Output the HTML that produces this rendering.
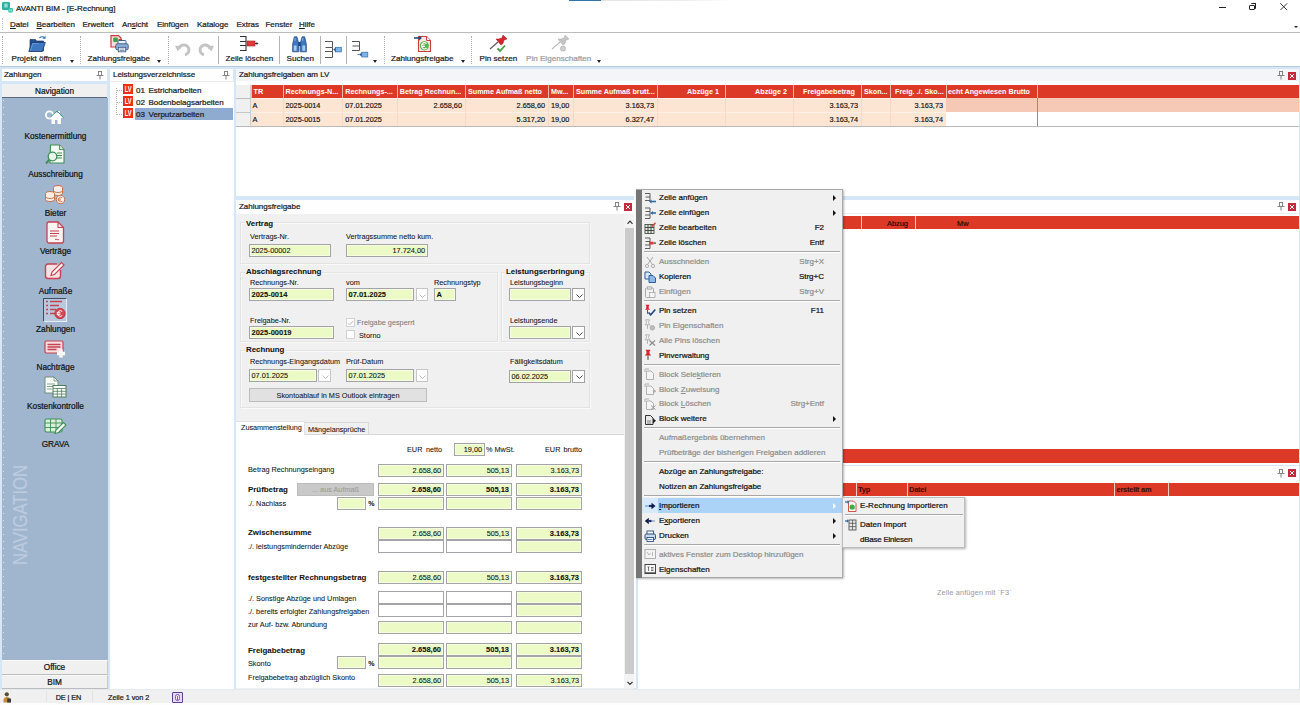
<!DOCTYPE html>
<html><head><meta charset="utf-8">
<style>
*{box-sizing:border-box;margin:0;padding:0}
html,body{width:1300px;height:705px;overflow:hidden;background:#fff}
body{font-family:"Liberation Sans",sans-serif;font-size:9.5px;color:#111;position:relative;-webkit-text-stroke:0.22px}
.a{position:absolute}
.t{position:absolute;white-space:nowrap;line-height:12px}
.ui{font-size:8px;letter-spacing:-0.03px;color:#1a1a1a}
.b{font-weight:bold}
.ph{position:absolute;height:14px;background:#f5f7fa}
.red{background:#dc3a26}
.f{position:absolute;background:#ecfac6;border:1px solid #a3a3a8;height:13.100px;font-size:7.3px;line-height:11.300px;-webkit-text-stroke:0.08px;text-align:right;padding-right:2px;white-space:nowrap;box-shadow:inset 0 0 0 1px rgba(255,255,255,.5)}
.f.l{text-align:left;padding-left:1.500px}
.f.b{font-size:7.500px}
.f.w{background:#fff;box-shadow:none}
.dd{position:absolute;height:13.100px;width:14px;background:#fff;border:1px solid #a2a2a2}
.dd svg{position:absolute;left:2.500px;top:4.300px}
.gb{position:absolute;border:1px solid #e3e3e3;box-shadow:1px 1px 0 #f9f9f9,inset 1px 1px 0 #f9f9f9}
.lb{position:absolute;white-space:nowrap;font-size:7.3px;line-height:11px;color:#111;-webkit-text-stroke:0.06px}
.mi{position:absolute;left:659px;white-space:nowrap;font-size:8px;letter-spacing:0;line-height:12px;color:#111}
.mi.d{color:#8e8e8e}
.sc{position:absolute;right:476px;white-space:nowrap;font-size:8px;letter-spacing:0;line-height:12px;color:#111}
.sc.d{color:#8e8e8e}
.sep{position:absolute;left:644px;width:196px;height:2px;border-top:1px solid #a8a8a8;border-bottom:1px solid #fff}
.ar{position:absolute;left:833px;width:0;height:0;border-left:3px solid #111;border-top:3px solid transparent;border-bottom:3px solid transparent}
.tsep{position:absolute;top:36px;height:28px;width:0;border-left:1px solid #b4b4b4}
.tdot{position:absolute;top:36px;height:28px;width:0;border-left:1px dotted #b0b0b0}
.tarr{position:absolute;top:60px;width:0;height:0;border-top:3px solid #222;border-left:2.5px solid transparent;border-right:2.5px solid transparent}
.tl{position:absolute;top:52.500px;white-space:nowrap;font-size:8.1px;letter-spacing:0;line-height:12px;color:#1a1a1a}
.nl{position:absolute;left:2px;width:107px;text-align:center;white-space:nowrap;font-size:8.25px;letter-spacing:0;line-height:12px;color:#111}
.th{position:absolute;top:85px;height:13px;border-left:1px solid #f3b7a8;color:#fff;font-size:7.2px;line-height:13px;white-space:nowrap;overflow:hidden;padding:0 3px 0 2px;font-weight:bold;letter-spacing:0;-webkit-text-stroke:0}
.td{position:absolute;height:14px;font-size:7.3px;letter-spacing:0;-webkit-text-stroke:0.16px;line-height:15px;white-space:nowrap;padding:0 3px 0 2px;color:#111;border-left:1px solid #f7d9ca}
.r{text-align:right}
.lv{width:10.600px;height:9.800px;background:#ee2e12;overflow:hidden}
.lv::after{content:"LV";position:absolute;left:-4.700px;top:0;width:20px;text-align:center;color:#fff;font-size:9.500px;line-height:10px;font-weight:bold;letter-spacing:-0.3px;transform:scaleX(.6);-webkit-text-stroke:0}
.xb{width:8px;height:8px;background:#c5283a;margin-top:.7px}
.xb::after{content:"";position:absolute;left:2px;top:2px;width:4px;height:4px;background:linear-gradient(45deg,transparent 38%,#fff 38%,#fff 62%,transparent 62%),linear-gradient(-45deg,transparent 38%,#fff 38%,#fff 62%,transparent 62%)}
</style></head><body>
<!-- TITLEBAR -->
<div class="a" style="left:569px;top:0;width:32px;height:1px;background:#2f74ad"></div>
<div class="a" style="left:601px;top:0;width:130px;height:1px;background:linear-gradient(to right,#e2e2e2,#efefef 70%,#fff)"></div>
<svg class="a" style="left:1.500px;top:2.300px" width="11" height="11" viewBox="0 0 11 11"><rect x="0" y="0" width="8" height="8" rx="1.300" fill="#2bb3a0"/><rect x="6.300" y="6" width="4.500" height="4.500" rx=".8" fill="#35bda8"/><rect x="2.600" y="1.600" width="1" height="3.800" fill="#e8f8f5"/><rect x="4.400" y="1.600" width="1" height="3.800" fill="#e8f8f5"/><rect x="7.500" y="7.200" width=".7" height="2.200" fill="#e8f8f5"/><rect x="8.800" y="7.200" width=".7" height="2.200" fill="#e8f8f5"/></svg>
<div class="t ui" style="left:16px;top:2.500px">AVANTI BIM - [E-Rechnung]</div>
<div class="a" style="left:1218.500px;top:6.500px;width:7px;height:1px;background:#222"></div>
<div class="a" style="left:1249px;top:4.500px;width:5.500px;height:5.500px;border:1px solid #222;border-radius:1px"></div>
<div class="a" style="left:1250.500px;top:3px;width:5.500px;height:5.500px;border-top:1px solid #222;border-right:1px solid #222;border-radius:1px"></div>
<svg class="a" style="left:1280px;top:3px" width="7.500" height="7.500" viewBox="0 0 7.500 7.500"><path d="M.3 .3L7.200 7.200M7.200 .3L.3 7.200" stroke="#222" stroke-width=".9"/></svg>
<!-- MENUBAR -->
<div class="a" style="left:2px;top:18px;width:0;height:12px;border-left:1px dotted #c4c4c4"></div>
<div class="t ui" style="left:10px;top:18.700px"><u>D</u>atei</div>
<div class="t ui" style="left:36.5px;top:18.700px"><u>B</u>earbeiten</div>
<div class="t ui" style="left:82.5px;top:18.700px">Erweitert</div>
<div class="t ui" style="left:122px;top:18.700px">An<u>s</u>icht</div>
<div class="t ui" style="left:157px;top:18.700px">Einfügen</div>
<div class="t ui" style="left:197px;top:18.700px">Kataloge</div>
<div class="t ui" style="left:236.5px;top:18.700px">Extras</div>
<div class="t ui" style="left:265.5px;top:18.700px">Fenster</div>
<div class="t ui" style="left:299px;top:18.700px"><u>H</u>ilfe</div>
<div class="a" style="left:1293.500px;top:26.200px;width:0;height:0;border-top:2.600px solid #222;border-left:2px solid transparent;border-right:2px solid transparent"></div>
<!-- TOOLBAR -->
<div class="a" style="left:0;top:31.600px;width:1300px;height:1px;background:#bcbcbc"></div>
<div class="a" style="left:0;top:65.500px;width:1300px;height:1px;background:#b9cadb"></div>
<div class="tdot" style="left:2px"></div>
<!-- projekt öffnen icon -->
<svg class="a" style="left:27.500px;top:34.500px" width="19" height="18" viewBox="0 0 19 18"><path d="M2 4.500h5.500l1 1.500h7V16H2z" fill="#24508f" stroke="#1a3b6e" stroke-width=".7"/><path d="M.8 16.500l3-9h13.500l-3 9z" fill="#3e78c2" stroke="#1a3b6e" stroke-width=".8"/><path d="M2.500 15.500l2.300-7h6" stroke="#6da0dd" stroke-width=".8" fill="none"/><path d="M11.500 3c1.800-1.700 3.800-1.500 5 0" stroke="#2f6cb5" stroke-width="1.100" fill="none"/><path d="M17.500 .8v3h-3z" fill="#2f6cb5"/></svg>
<div class="tl" style="left:11.5px">Projekt öffnen</div><div class="tarr" style="left:69.5px"></div>
<div class="tdot" style="left:80px"></div>
<!-- zahlungsfreigabe print icon -->
<svg class="a" style="left:110px;top:35px" width="20" height="18" viewBox="0 0 20 18"><path d="M1 .6h7.500l2.500 2.500V12H1z" fill="#f7dcdc" stroke="#cc3a3a" stroke-width="1.200"/><rect x="3.200" y="2.500" width="4.600" height="4.600" rx="1" fill="#3f9e4a"/><path d="M8.500 4.500h3.500" stroke="#cc3a3a" stroke-width="1"/><rect x="8" y="5.500" width="8" height="4" rx=".8" fill="#eef3f9" stroke="#2f527f" stroke-width=".9"/><rect x="5.800" y="8.800" width="12.400" height="6" rx="1.500" fill="#8fb0d8" stroke="#2f527f" stroke-width=".9"/><rect x="8.300" y="12.300" width="7.400" height="4.500" fill="#fff" stroke="#2f527f" stroke-width=".8"/><path d="M9.500 14h5M9.500 15.500h5" stroke="#2f527f" stroke-width=".6"/></svg>
<div class="tl" style="left:87.5px">Zahlungsfreigabe</div><div class="tarr" style="left:157px"></div>
<div class="tdot" style="left:168px"></div>
<!-- undo / redo -->
<svg class="a" style="left:175px;top:42px" width="16" height="15" viewBox="0 0 16 15"><path d="M4 7A5 5 0 1 1 10 12.800" fill="none" stroke="#c4c4c4" stroke-width="3"/><path d="M0 3.800l7 0-4.300 5.700z" fill="#c4c4c4"/></svg>
<svg class="a" style="left:198px;top:42px" width="16" height="15" viewBox="0 0 16 15"><path d="M12 7A5 5 0 1 0 6 12.800" fill="none" stroke="#c4c4c4" stroke-width="3"/><path d="M16 3.800l-7 0 4.300 5.700z" fill="#c4c4c4"/></svg>
<div class="tsep" style="left:218px"></div>
<!-- zeile löschen icon -->
<svg class="a" style="left:239px;top:35px" width="20" height="17" viewBox="0 0 20 17"><path d="M1 1.5h6v5H1M1 10.5h6v5H1M7 4v9" fill="none" stroke="#333" stroke-width="1.1"/><rect x="8" y="6" width="8" height="5" fill="#e23a3a" stroke="#a52222" stroke-width=".6"/><path d="M16 8.5h3" stroke="#333" stroke-width="1"/><path d="M19.5 8.5l-2-1.6v3.2z" fill="#333"/></svg>
<div class="tl" style="left:225.5px">Zeile löschen</div>
<div class="tsep" style="left:279px"></div>
<!-- suchen (binoculars) -->
<svg class="a" style="left:292px;top:35.500px" width="15" height="17" viewBox="0 0 15 17"><path d="M2.300 .8h2.600l1.300 4.500.6 3v7.500H.6V8.300l.7-3zM10.100 .8h2.600l1 4.500.7 3v7.500H8.200V8.300l.6-3z" fill="#3f76c0" stroke="#1f4585" stroke-width=".7"/><rect x="6.300" y="6" width="2.400" height="4" fill="#1f4585"/><path d="M1.800 9.500h2.800v5.300H1.800zM10.400 9.500h2.800v5.300h-2.800z" fill="#a9cbf0"/><path d="M3 2v3M10.800 2v3" stroke="#9cc2ee" stroke-width=".8"/></svg>
<div class="tl" style="left:286.5px">Suchen</div>
<div class="tsep" style="left:320px"></div>
<!-- anfügen -->
<svg class="a" style="left:324px;top:40px" width="19" height="19" viewBox="0 0 19 19"><path d="M1 1.500h7.500v6H1.500M8.500 7.500v4M1 11.500h7.500v6H1M8.500 11.500" fill="none" stroke="#555" stroke-width="1"/><rect x="11.500" y="7.300" width="5.800" height="4.600" fill="#7db4ea" stroke="#2f6cae" stroke-width=".7"/><path d="M9.300 9.600l2.200-1.800v3.600z" fill="#1f4f8f"/></svg>
<div class="tsep" style="left:346px"></div>
<!-- einfügen -->
<svg class="a" style="left:351px;top:40px" width="19" height="19" viewBox="0 0 19 19"><path d="M1 1.500h7.500v4.500H1.500M8.500 6v4.500H1" fill="none" stroke="#555" stroke-width="1"/><rect x="10.800" y="12.200" width="6" height="4.800" fill="#7db4ea" stroke="#2f6cae" stroke-width=".7"/><path d="M8.300 14.600l2.300-1.800v3.600z" fill="#1f4f8f"/><path d="M6.500 14.600h2" stroke="#1f4f8f" stroke-width=".8"/></svg>
<div class="tarr" style="left:372.500px"></div>
<div class="tdot" style="left:383.500px"></div>
<!-- zahlungsfreigabe euro doc -->
<svg class="a" style="left:414px;top:35px" width="18" height="18" viewBox="0 0 18 18"><path d="M4.500 1.500h8l4 4v11h-12z" fill="#fbe9e6" stroke="#c9403a" stroke-width="1.100"/><path d="M12.500 1.500v4h4" fill="#fff" stroke="#c9403a" stroke-width="1"/><circle cx="10.300" cy="10.800" r="4.600" fill="#58b548"/><path d="M12.600 8.600a3 3 0 1 0 0 4.400M7.300 10h3.600M7.300 11.500h3.600" stroke="#fff" stroke-width="1.100" fill="none"/><path d="M0 3h6" stroke="#1f4f8f" stroke-width="1.600"/><path d="M8 3l-3-2.500v5z" fill="#1f4f8f"/></svg>
<div class="tl" style="left:391px">Zahlungsfreigabe</div><div class="tarr" style="left:460.500px"></div>
<div class="tdot" style="left:471px"></div>
<!-- pin setzen -->
<svg class="a" style="left:489px;top:35px" width="20" height="18" viewBox="0 0 20 18"><path d="M1 14l8-7" stroke="#555" stroke-width="1.100"/><path d="M7 4l5 6 2-1.500 1-3.500 3-1-4-4-1 3-3.500 1z" fill="#d8232a" stroke="#9e1419" stroke-width=".5"/><path d="M8.500 13.500l2.500 2.500 5-5.500" stroke="#3aa23a" stroke-width="1.800" fill="none"/></svg>
<div class="tl" style="left:479.500px">Pin setzen</div>
<!-- pin eigenschaften (disabled) -->
<svg class="a" style="left:551px;top:35px" width="20" height="18" viewBox="0 0 20 18"><path d="M1 14l8-7" stroke="#bbb" stroke-width="1.100"/><path d="M7 4l5 6 2-1.500 1-3.500 3-1-4-4-1 3-3.500 1z" fill="#c4c4c4" stroke="#a8a8a8" stroke-width=".5"/><circle cx="12" cy="13.500" r="2.600" fill="#cfcfcf" stroke="#aaa" stroke-width=".6"/></svg>
<div class="tl" style="left:526px;color:#9a9a9a">Pin Eigenschaften</div><div class="tarr" style="left:597px"></div>
<!-- BACKGROUND FRAME (light blue gaps) -->
<div class="a" style="left:0;top:67px;width:1300px;height:622px;background:#d5e7f6"></div>
<!-- LEFT NAV PANEL -->
<div class="a" style="left:2px;top:69px;width:105px;height:12px;background:#fefefe"></div>
<div class="t ui" style="left:4px;top:69px">Zahlungen</div>
<svg class="a pin" style="left:96px;top:71px" width="8" height="9" viewBox="0 0 8 9"><path d="M2 .5h4M2.500 .5v3.500M5.500 .5v3.500M.5 4.500h7M4 4.500v4" stroke="#777" stroke-width=".9" fill="none"/></svg>
<div class="a" style="left:2px;top:84px;width:105px;height:14px;background:#f0f0f0;border-bottom:1px solid #55677d"></div>
<div class="nl" style="top:85.500px;left:2px;width:105px">Navigation</div>
<div class="a" style="left:2px;top:98px;width:105.500px;height:561.500px;background:#a0b6cf"></div>
<div class="a" style="left:3px;top:100px;width:1px;height:558px;background:repeating-linear-gradient(to bottom,#d8e3f0 0 1px,transparent 1px 7px)"></div>
<!-- nav icons -->
<svg class="a" style="left:45.0px;top:108.0px" width="21" height="17" viewBox="0 0 21 17"><circle cx="4.500" cy="7" r="3.600" fill="none" stroke="#fff" stroke-width="1.800"/><path d="M6 9l5-5 2 1.500V3h2v4l3 3h-2v6h-3.500v-4h-2.500v4H6.500v-6z" fill="#fff"/><path d="M6 8.500l6-5.500 6.500 6.500" stroke="#3a9a86" stroke-width="1" fill="none"/></svg>
<div class="nl" style="top:131.100px">Kostenermittlung</div>
<svg class="a" style="left:45.0px;top:144.0px" width="21" height="22" viewBox="0 0 21 22"><path d="M5.500 1h9l4.500 4.500V19h-14z" fill="#f4faf4" stroke="#3f8f55" stroke-width="1.100"/><path d="M14.500 1v4.500H19" fill="#cfe6d2" stroke="#3f8f55" stroke-width=".9"/><path d="M12 9h5M12 11.500h5M12 14h5" stroke="#3f8f55" stroke-width="1.200"/><circle cx="7.500" cy="12.500" r="4.300" fill="#e9f5ea" stroke="#3f8f55" stroke-width="1.300"/><path d="M4.300 15.700L1 19.500" stroke="#3f8f55" stroke-width="2"/></svg>
<div class="nl" style="top:168.9px">Ausschreibung</div>
<svg class="a" style="left:44.0px;top:184.0px" width="22" height="21" viewBox="0 0 22 21"><g fill="#fbeee6" stroke="#c86f48" stroke-width="1"><ellipse cx="14" cy="3.500" rx="4.500" ry="2"/><path d="M9.500 3.500v3c0 1.100 2 2 4.500 2s4.500-.9 4.500-2v-3M9.500 6.500v3c0 1.100 2 2 4.500 2s4.500-.9 4.500-2v-3"/><ellipse cx="6" cy="9.500" rx="4.500" ry="2"/><path d="M1.500 9.500v3c0 1.100 2 2 4.500 2s4.500-.9 4.500-2v-3M1.500 12.500v3c0 1.100 2 2 4.500 2s4.500-.9 4.500-2v-3"/><circle cx="16.500" cy="15.500" r="4.200"/></g><path d="M18.300 13.800a2.300 2.300 0 1 0 0 3.400M13.800 15h3M13.800 16.200h3" stroke="#c86f48" stroke-width=".8" fill="none"/></svg>
<div class="nl" style="top:207.9px">Bieter</div>
<svg class="a" style="left:46.0px;top:221.0px" width="19" height="23" viewBox="0 0 19 23"><path d="M3 1h9l5.500 5.500V20a2 2 0 0 1-2 2H3a2 2 0 0 1-2-2V3a2 2 0 0 1 2-2z" fill="#fdf3f3" stroke="#c64250" stroke-width="1.300"/><path d="M12 1v5.500h5.500" fill="none" stroke="#c64250" stroke-width="1.100"/><path d="M4 10h9M4 12.500h9M4 15h7" stroke="#c64250" stroke-width="1.200"/><path d="M9 18.500c1.500-1 2.500 1 4 0" stroke="#c64250" stroke-width=".9" fill="none"/></svg>
<div class="nl" style="top:246.4px">Verträge</div>
<svg class="a" style="left:44.0px;top:261.0px" width="22" height="20" viewBox="0 0 22 20"><path d="M13 3H4a2.500 2.500 0 0 0-2.500 2.500V15A2.500 2.500 0 0 0 4 17.500h10A2.500 2.500 0 0 0 16.500 15V9" fill="#f6e1e3" stroke="#c64250" stroke-width="1.400"/><path d="M7 14.500l1-3.500L17.500 1.500l2.500 2.500L10.500 13.500z" fill="#fff" stroke="#c64250" stroke-width="1.200"/></svg>
<div class="nl" style="top:285.600px">Aufmaße</div>
<div class="a" style="left:43px;top:297.500px;width:24px;height:24px;border:1px solid #3c4f66;border-right-color:#e6edf5;border-bottom-color:#e6edf5;background:#b9c8dc"></div>
<svg class="a" style="left:45.0px;top:299.0px" width="21" height="21" viewBox="0 0 21 21"><path d="M1 2.500h2M5 2.500h12M1 6.500h2M5 6.500h9M1 10.500h2M5 10.500h6M1 14.500h2M5 14.500h5" stroke="#c64250" stroke-width="1.600"/><circle cx="15" cy="14.500" r="5.200" fill="#d8464f" stroke="#b8303c" stroke-width=".8"/><path d="M17.200 12.400a2.800 2.800 0 1 0 0 4.200M11.800 13.800h3.600M11.800 15.300h3.600" stroke="#fff" stroke-width="1" fill="none"/></svg>
<div class="nl" style="top:324px">Zahlungen</div>
<svg class="a" style="left:44.0px;top:340.0px" width="23" height="18" viewBox="0 0 23 18"><rect x="1" y="1" width="18" height="12" rx="1.500" fill="#f6dfe1" stroke="#c64250" stroke-width="1.200"/><path d="M3.500 4.500h13M3.500 7h13M3.500 9.500h9" stroke="#c64250" stroke-width="1.300"/><path d="M17 9.500v8M13 13.500h8" stroke="#fff" stroke-width="3.400"/><path d="M17 10v7M13.500 13.500h7" stroke="#fdf4f4" stroke-width="2"/></svg>
<div class="nl" style="top:362.400px">Nachträge</div>
<svg class="a" style="left:44.0px;top:376.0px" width="23" height="22" viewBox="0 0 23 22"><path d="M1 1h9l4 4v12H1z" fill="#fbfdfb" stroke="#6f8f78" stroke-width="1"/><path d="M10 1v4h4" fill="none" stroke="#6f8f78" stroke-width=".8"/><path d="M3 8h8M3 10.500h6M3 13h5" stroke="#8aa892" stroke-width="1"/><rect x="9" y="9.500" width="13" height="11.500" fill="#fff" stroke="#4f7d5b" stroke-width="1"/><path d="M9 12.500h13M9 15.300h13M9 18.100h13M13.300 12.500v8.500M17.600 12.500v8.500" stroke="#4f7d5b" stroke-width=".8"/></svg>
<div class="nl" style="top:400.9px">Kostenkontrolle</div>
<svg class="a" style="left:44.0px;top:418.0px" width="23" height="17" viewBox="0 0 23 17"><rect x="1" y="1" width="17" height="13" rx="1.500" fill="#d9efd9" stroke="#3f8f55" stroke-width="1.100"/><path d="M1 5h17M1 9.500h17M6.500 1v13M12 1v13" stroke="#3f8f55" stroke-width=".9"/><path d="M11 15.500l1-3.500 7.500-7.500 2.500 2.500-7.500 7.500z" fill="#fff" stroke="#3f8f55" stroke-width="1.100"/></svg>
<div class="nl" style="top:439.400px">GRAVA</div>
<div class="a" style="left:-49.300px;top:502.800px;width:140px;height:24px;transform:rotate(-90deg) scaleX(.862);transform-origin:center;font-size:19.300px;line-height:24px;color:#bccbdf;white-space:nowrap;text-align:center">NAVIGATION</div>
<div class="a" style="left:2px;top:659.500px;width:105.500px;height:15px;background:#f0f0f0;border-top:1px solid #fafafa;border-bottom:1px solid #bcbcbc;border-right:1px solid #c8c8c8"></div>
<div class="nl" style="top:662.300px;left:2px;width:105px">Office</div>
<div class="a" style="left:2px;top:674.500px;width:105.500px;height:14px;background:#f0f0f0;border-top:1px solid #fafafa;border-bottom:1px solid #bcbcbc;border-right:1px solid #c8c8c8"></div>
<div class="nl" style="top:676.500px;left:2px;width:105px">BIM</div>
<!-- TREE PANEL -->
<div class="a" style="left:110px;top:69px;width:123px;height:12px;background:#fefefe"></div>
<div class="t ui" style="left:113px;top:69px">Leistungsverzeichnisse</div>
<svg class="a pin" style="left:222px;top:71px" width="8" height="9" viewBox="0 0 8 9"><path d="M2 .5h4M2.500 .5v3.500M5.500 .5v3.500M.5 4.500h7M4 4.500v4" stroke="#777" stroke-width=".9" fill="none"/></svg>
<div class="a" style="left:110px;top:81px;width:123.500px;height:607.500px;background:#fff;border-top:1px solid #ececee"></div>
<div class="a" style="left:116px;top:88px;width:0;height:27px;border-left:1px dotted #b4b4b4"></div>
<div class="a" style="left:116px;top:90px;width:6px;height:0;border-top:1px dotted #b4b4b4"></div>
<div class="a" style="left:116px;top:102px;width:6px;height:0;border-top:1px dotted #b4b4b4"></div>
<div class="a" style="left:116px;top:114px;width:6px;height:0;border-top:1px dotted #b4b4b4"></div>
<div class="a" style="left:135px;top:108.300px;width:98px;height:11.500px;background:#8fabd0"></div>
<div class="a lv" style="left:122.700px;top:84px"></div>
<div class="a lv" style="left:122.700px;top:96.100px"></div>
<div class="a lv" style="left:122.700px;top:108.300px"></div>
<div class="t ui" style="left:136px;top:84.600px;word-spacing:1.500px">01 Estricharbeiten</div>
<div class="t ui" style="left:136px;top:96.600px;word-spacing:1.500px">02 Bodenbelagsarbeiten</div>
<div class="t ui" style="left:136px;top:108.600px;word-spacing:1.500px">03 Verputzarbeiten</div>
<!-- TOP TABLE PANEL -->
<div class="a" style="left:236px;top:69px;width:1063px;height:12px;background:#f4f5f8"></div>
<div class="t ui" style="left:239px;top:69px">Zahlungsfreigaben am LV</div>
<svg class="a pin" style="left:1277px;top:71px" width="8" height="9" viewBox="0 0 8 9"><path d="M2 .5h4M2.500 .5v3.500M5.500 .5v3.500M.5 4.500h7M4 4.500v4" stroke="#777" stroke-width=".9" fill="none"/></svg>
<div class="a xb" style="left:1288px;top:71px"></div>
<div class="a" style="left:236px;top:81px;width:1062.500px;height:115px;background:#fff"></div>
<!-- row header col -->
<div class="a" style="left:235.500px;top:85px;width:15px;height:41px;background:#f0f0f0;border-right:1px solid #cfcfcf"></div>
<div class="a" style="left:235.500px;top:97.500px;width:15px;height:1px;background:#bdbdbd"></div>
<div class="a" style="left:235.500px;top:111.500px;width:15px;height:1px;background:#c6c6c6"></div>
<!-- header -->
<div class="a red" style="left:250.500px;top:85px;width:1048px;height:13px"></div>
<div class="a" style="left:250.500px;top:98px;width:695.500px;height:28px;background:#fde5d3"></div>
<div class="a" style="left:946px;top:98px;width:353px;height:14px;background:#f5c9b5"></div>
<div class="a" style="left:251px;top:111.700px;width:695px;height:1px;background:#fef0e6"></div><div class="a" style="left:251px;top:98px;width:695px;height:1px;background:#fef0e6"></div>
<div class="a" style="left:235.500px;top:126px;width:1063.500px;height:1px;background:#b9b9b9"></div>
<div class="a" style="left:1037px;top:98px;width:1px;height:28px;background:#8f8f8f"></div>
<div class="th" style="left:250.500px;width:32px">TR</div>
<div class="th" style="left:282.500px;width:59.800px">Rechnungs-N...</div>
<div class="th" style="left:342.300px;width:54.500px">Rechnungs-...</div>
<div class="th" style="left:396.800px;width:68.200px">Betrag Rechnun...</div>
<div class="th" style="left:465px;width:83px">Summe Aufmaß netto</div>
<div class="th" style="left:548px;width:25px">Mw...</div>
<div class="th" style="left:573px;width:84px">Summe Aufmaß brutt...</div>
<div class="th r" style="left:657px;width:68px;padding-right:6px">Abzüge 1</div>
<div class="th r" style="left:725px;width:68px;padding-right:6px">Abzüge 2</div>
<div class="th r" style="left:793px;width:68px;padding-right:6px">Freigabebetrag</div>
<div class="th" style="left:861px;width:29px">Skon...</div>
<div class="th" style="left:890px;width:56px;padding-left:4px">Freig. ./. Sko...</div>
<div class="th" style="left:946px;width:91px;padding-left:1px">echt Angewiesen Brutto</div>
<div class="th" style="left:1037px;width:262px"></div>
<!-- rows -->
<div class="td" style="left:250.500px;top:98px;width:32px;border-left:none">A</div>
<div class="td" style="left:282.500px;top:98px;width:59.800px">2025-0014</div>
<div class="td" style="left:342.300px;top:98px;width:54.500px">07.01.2025</div>
<div class="td r" style="left:396.800px;top:98px;width:68.200px">2.658,60</div>
<div class="td r" style="left:465px;top:98px;width:83px">2.658,60</div>
<div class="td" style="left:548px;top:98px;width:25px">19,00</div>
<div class="td r" style="left:573px;top:98px;width:84px">3.163,73</div>
<div class="td" style="left:657px;top:98px;width:68px"></div>
<div class="td" style="left:725px;top:98px;width:68px"></div>
<div class="td r" style="left:793px;top:98px;width:68px">3.163,73</div>
<div class="td" style="left:861px;top:98px;width:29px"></div>
<div class="td r" style="left:890px;top:98px;width:56px">3.163,73</div>
<div class="td" style="left:250.500px;top:112px;width:32px;border-left:none">A</div>
<div class="td" style="left:282.500px;top:112px;width:59.800px">2025-0015</div>
<div class="td" style="left:342.300px;top:112px;width:54.500px">07.01.2025</div>
<div class="td r" style="left:396.800px;top:112px;width:68.200px"></div>
<div class="td r" style="left:465px;top:112px;width:83px">5.317,20</div>
<div class="td" style="left:548px;top:112px;width:25px">19,00</div>
<div class="td r" style="left:573px;top:112px;width:84px">6.327,47</div>
<div class="td" style="left:657px;top:112px;width:68px"></div>
<div class="td" style="left:725px;top:112px;width:68px"></div>
<div class="td r" style="left:793px;top:112px;width:68px">3.163,74</div>
<div class="td" style="left:861px;top:112px;width:29px"></div>
<div class="td r" style="left:890px;top:112px;width:56px">3.163,74</div>
<!-- ZAHLUNGSFREIGABE PANEL -->
<div class="a" style="left:236px;top:200px;width:398px;height:12px;background:#fefefe"></div>
<div class="t ui" style="left:239px;top:200.500px">Zahlungsfreigabe</div>
<svg class="a pin" style="left:613px;top:202px" width="8" height="9" viewBox="0 0 8 9"><path d="M2 .5h4M2.500 .5v3.500M5.500 .5v3.500M.5 4.500h7M4 4.500v4" stroke="#777" stroke-width=".9" fill="none"/></svg>
<div class="a xb" style="left:624px;top:202px"></div>
<div class="a" style="left:236px;top:212px;width:398px;height:3px;background:#fdfdfd"></div><div class="a" style="left:236px;top:214px;width:398px;height:474.500px;background:#f0f0f0"></div>
<!-- scrollbar -->
<div class="a" style="left:624px;top:214px;width:10px;height:474px;background:#f3f3f3"></div>
<div class="a" style="left:624.600px;top:227.700px;width:9px;height:446px;background:#cbcbcb"></div>
<svg class="a" style="left:626.600px;top:219.500px" width="6" height="4.500" viewBox="0 0 6 4.500"><path d="M.5 3.800L3 1.200l2.500 2.600" stroke="#333" stroke-width="1.200" fill="none"/></svg>
<svg class="a" style="left:626.600px;top:680.500px" width="6" height="4.500" viewBox="0 0 6 4.500"><path d="M.5 .8L3 3.400 5.500 .8" stroke="#333" stroke-width="1.200" fill="none"/></svg>
<!-- group Vertrag -->
<div class="gb" style="left:240px;top:222px;width:350px;height:42px"></div>
<div class="lb b" style="left:246px;top:217.700px;font-size:7.850px;background:#f0f0f0;padding:0 1px;left:245px">Vertrag</div>
<div class="lb" style="left:250px;top:231px">Vertrags-Nr.</div>
<div class="f l" style="left:249px;top:244px;width:82px">2025-00002</div>
<div class="lb" style="left:346px;top:231px">Vertragssumme netto kum.</div>
<div class="f" style="left:346px;top:244px;width:82px">17.724,00</div>
<!-- group Abschlagsrechnung -->
<div class="gb" style="left:240px;top:272px;width:258px;height:70px"></div>
<div class="lb b" style="left:245px;top:266px;font-size:7.850px;background:#f0f0f0;padding:0 1px">Abschlagsrechnung</div>
<div class="lb" style="left:250px;top:277.400px">Rechnungs-Nr.</div>
<div class="f l b" style="left:249px;top:288.400px;width:85px">2025-0014</div>
<div class="lb" style="left:346px;top:277.400px">vom</div>
<div class="f l b" style="left:346px;top:288.400px;width:68.300px">07.01.2025</div>
<div class="dd" style="left:415.500px;top:288.400px;width:12px;border-color:#c6c6c6"><svg width="7" height="4" viewBox="0 0 7 4"><path d="M.5 .5L3.500 3.500l3-3" stroke="#bbb" stroke-width="1" fill="none"/></svg></div>
<div class="lb" style="left:434px;top:277.400px">Rechnungstyp</div>
<div class="f l b" style="left:434px;top:288.400px;width:22px">A</div>
<div class="lb" style="left:250px;top:314.500px">Freigabe-Nr.</div>
<div class="f l b" style="left:249px;top:326.300px;width:85px">2025-00019</div>
<div class="a" style="left:346px;top:318px;width:9px;height:9px;background:#fff;border:1px solid #d2d2d2"></div>
<svg class="a" style="left:347px;top:320px" width="7" height="6" viewBox="0 0 7 6"><path d="M.7 3l2 2L6.300 .8" stroke="#c0c0c0" stroke-width="1" fill="none"/></svg>
<div class="lb" style="left:357px;top:317px;color:#7a7a7a">Freigabe gesperrt</div>
<div class="a" style="left:346px;top:330px;width:9px;height:9px;background:#fff;border:1px solid #d2d2d2"></div>
<div class="lb" style="left:359px;top:330px">Storno</div>
<!-- group Leistungserbringung -->
<div class="gb" style="left:501px;top:272px;width:89px;height:70px"></div>
<div class="lb b" style="left:505px;top:266px;font-size:7.850px;background:#f0f0f0;padding:0 1px">Leistungserbringung</div>
<div class="lb" style="left:510px;top:277.400px">Leistungsbeginn</div>
<div class="f l" style="left:509px;top:288.400px;width:62px"></div>
<div class="dd" style="left:572px;top:288.400px;width:12.500px"><svg width="7" height="4" viewBox="0 0 7 4"><path d="M.5 .5L3.500 3.500l3-3" stroke="#444" stroke-width="1" fill="none"/></svg></div>
<div class="lb" style="left:510px;top:314.500px">Leistungsende</div>
<div class="f l" style="left:509px;top:326.400px;width:62px"></div>
<div class="dd" style="left:572px;top:326.400px;width:12.500px"><svg width="7" height="4" viewBox="0 0 7 4"><path d="M.5 .5L3.500 3.500l3-3" stroke="#444" stroke-width="1" fill="none"/></svg></div>
<!-- group Rechnung -->
<div class="gb" style="left:240px;top:350px;width:350px;height:58px"></div>
<div class="lb b" style="left:245px;top:344px;font-size:7.850px;background:#f0f0f0;padding:0 1px">Rechnung</div>
<div class="lb" style="left:250px;top:355.700px">Rechnungs-Eingangsdatum</div>
<div class="f l" style="left:249px;top:369.300px;width:68px">07.01.2025</div>
<div class="dd" style="left:318.300px;top:369.300px;width:12.500px;border-color:#c6c6c6"><svg width="7" height="4" viewBox="0 0 7 4"><path d="M.5 .5L3.500 3.500l3-3" stroke="#bbb" stroke-width="1" fill="none"/></svg></div>
<div class="lb" style="left:346px;top:355.700px">Prüf-Datum</div>
<div class="f l" style="left:346px;top:369.300px;width:68.300px">07.01.2025</div>
<div class="dd" style="left:415.500px;top:369.300px;width:12px;border-color:#c6c6c6"><svg width="7" height="4" viewBox="0 0 7 4"><path d="M.5 .5L3.500 3.500l3-3" stroke="#bbb" stroke-width="1" fill="none"/></svg></div>
<div class="lb" style="left:510px;top:355.700px">Fälligkeitsdatum</div>
<div class="f l" style="left:509px;top:369.500px;width:62px">06.02.2025</div>
<div class="dd" style="left:572px;top:369.500px;width:12.500px"><svg width="7" height="4" viewBox="0 0 7 4"><path d="M.5 .5L3.500 3.500l3-3" stroke="#444" stroke-width="1" fill="none"/></svg></div>
<div class="a" style="left:249px;top:388px;width:178px;height:14px;background:#e1e1e1;border:1px solid #bdbdbd"></div>
<div class="lb" style="left:249px;top:389.500px;width:178px;text-align:center">Skontoablauf in MS Outlook eintragen</div>
<!-- TAB AREA -->
<div class="a" style="left:236px;top:434px;width:388px;height:254px;background:#fff;border-top:1px solid #d9d9d9"></div>
<div class="a" style="left:236px;top:421px;width:69px;height:14px;background:#fff;border:1px solid #e3e3e3;border-bottom:none;border-left:none"></div>
<div class="lb" style="left:241px;top:421.800px;font-size:7.3px;letter-spacing:-0.06px">Zusammenstellung</div>
<div class="a" style="left:305px;top:422px;width:64px;height:12px;background:#f0f0f0;border:1px solid #d9d9d9;border-bottom:none;border-left:none"></div>
<div class="lb" style="left:308px;top:423.500px;font-size:7.3px;letter-spacing:-0.05px">Mängelansprüche</div>
<!-- CALC GRID -->
<div class="lb" style="left:407px;top:443.800px;word-spacing:1.500px">EUR netto</div>
<div class="f" style="left:454px;top:443px;width:31px">19,00</div>
<div class="lb" style="left:486px;top:443.800px">% MwSt.</div>
<div class="lb" style="left:545px;top:443.800px;word-spacing:1px">EUR brutto</div>
<div class="lb" style="left:248px;top:464.2px">Betrag Rechnungseingang</div>
<div class="f" style="left:378px;top:464px;width:66px">2.658,60</div>
<div class="f" style="left:446px;top:464px;width:66px">505,13</div>
<div class="f" style="left:516px;top:464px;width:66px">3.163,73</div>
<div class="lb b" style="left:248px;top:484.0px;font-size:7.9px">Prüfbetrag</div>
<div class="f b" style="left:378px;top:483px;width:66px">2.658,60</div>
<div class="f b" style="left:446px;top:483px;width:66px">505,13</div>
<div class="f b" style="left:516px;top:483px;width:66px">3.163,73</div>
<div class="lb" style="left:248px;top:497.9px">./. Nachlass</div>
<div class="f" style="left:378px;top:496.700px;width:66px"></div>
<div class="f" style="left:446px;top:496.700px;width:66px"></div>
<div class="f" style="left:516px;top:496.700px;width:66px"></div>
<div class="lb b" style="left:248px;top:527.2px;font-size:7.9px">Zwischensumme</div>
<div class="f" style="left:378px;top:526.800px;width:66px">2.658,60</div>
<div class="f" style="left:446px;top:526.800px;width:66px">505,13</div>
<div class="f b" style="left:516px;top:526.800px;width:66px">3.163,73</div>
<div class="lb" style="left:248px;top:541.4px">./. leistungsmindernder Abzüge</div>
<div class="f w" style="left:378px;top:540.300px;width:66px"></div>
<div class="f w" style="left:446px;top:540.300px;width:66px"></div>
<div class="f" style="left:516px;top:540.300px;width:66px"></div>
<div class="lb b" style="left:248px;top:571.9px;font-size:7.9px">festgestellter Rechnungsbetrag</div>
<div class="f" style="left:378px;top:571.200px;width:66px">2.658,60</div>
<div class="f" style="left:446px;top:571.200px;width:66px">505,13</div>
<div class="f b" style="left:516px;top:571.200px;width:66px">3.163,73</div>
<div class="lb" style="left:248px;top:592.7px">./. Sonstige Abzüge und Umlagen</div>
<div class="f w" style="left:378px;top:590.800px;width:66px"></div>
<div class="f w" style="left:446px;top:590.800px;width:66px"></div>
<div class="f" style="left:516px;top:590.800px;width:66px"></div>
<div class="lb" style="left:248px;top:606.0px">./. bereits erfolgter Zahlungsfreigaben</div>
<div class="f w" style="left:378px;top:604.200px;width:66px"></div>
<div class="f w" style="left:446px;top:604.200px;width:66px"></div>
<div class="f" style="left:516px;top:604.200px;width:66px"></div>
<div class="lb" style="left:248px;top:619.2px">zur Auf- bzw. Abrundung</div>
<div class="f" style="left:378px;top:621.400px;width:66px"></div>
<div class="f" style="left:446px;top:621.400px;width:66px"></div>
<div class="f" style="left:516px;top:621.400px;width:66px"></div>
<div class="lb b" style="left:248px;top:644.8px;font-size:7.9px">Freigabebetrag</div>
<div class="f b" style="left:378px;top:643.300px;width:66px">2.658,60</div>
<div class="f b" style="left:446px;top:643.300px;width:66px">505,13</div>
<div class="f b" style="left:516px;top:643.300px;width:66px">3.163,73</div>
<div class="lb" style="left:248px;top:658.0px">Skonto</div>
<div class="f" style="left:378px;top:656.200px;width:66px"></div>
<div class="f" style="left:446px;top:656.200px;width:66px"></div>
<div class="f" style="left:516px;top:656.200px;width:66px"></div>
<div class="lb" style="left:248px;top:671.6px">Freigabebetrag abzüglich Skonto</div>
<div class="f" style="left:378px;top:673.600px;width:66px">2.658,60</div>
<div class="f" style="left:446px;top:673.600px;width:66px">505,13</div>
<div class="f" style="left:516px;top:673.600px;width:66px">3.163,73</div>
<div class="a" style="left:297px;top:483px;width:77px;height:13.100px;background:#c9c9c9;border:1px solid #bdbdbd"></div>
<div class="lb" style="left:297px;top:484px;width:77px;text-align:center;color:#9b9b9b">... aus Aufmaß</div>
<div class="f" style="left:337px;top:496.700px;width:29px"></div>
<div class="lb b" style="left:368.300px;top:498px;font-size:7px">%</div>
<div class="f" style="left:337px;top:656.200px;width:29px"></div>
<div class="lb b" style="left:368.300px;top:657.600px;font-size:7px">%</div>
<!-- RIGHT PANEL 1 -->
<div class="a" style="left:634px;top:200px;width:1.800px;height:488px;background:#fafcfe"></div>
<div class="a" style="left:637.500px;top:200px;width:661.500px;height:12px;background:#fefefe"></div>
<svg class="a pin" style="left:1277px;top:202px" width="8" height="9" viewBox="0 0 8 9"><path d="M2 .5h4M2.500 .5v3.500M5.500 .5v3.500M.5 4.500h7M4 4.500v4" stroke="#777" stroke-width=".9" fill="none"/></svg>
<div class="a xb" style="left:1288px;top:202px"></div>
<div class="a" style="left:637.500px;top:212px;width:661.500px;height:252.600px;background:#fff"></div>
<div class="a" style="left:637.500px;top:213px;width:661.500px;height:1px;background:#eeeeee"></div>
<div class="a red" style="left:638px;top:216.100px;width:661px;height:13.300px"></div>
<div class="a" style="left:860.500px;top:216.100px;width:1.400px;height:13.300px;background:#f6cdc2"></div>
<div class="a" style="left:915px;top:216.100px;width:1.400px;height:13.300px;background:#f6cdc2"></div>
<div class="lb" style="left:887px;top:217.700px;font-size:7.4px;color:#2a0a05;-webkit-text-stroke:.2px">Abzug</div>
<div class="lb" style="left:957px;top:217.700px;font-size:7.4px;color:#2a0a05;-webkit-text-stroke:.2px">Mw</div>
<div class="a red" style="left:638px;top:449px;width:661px;height:13.500px"></div>
<!-- RIGHT PANEL 2 -->
<div class="a" style="left:637.500px;top:465.600px;width:661.500px;height:13.400px;background:#fefefe"></div>
<svg class="a pin" style="left:1277px;top:468.500px" width="8" height="9" viewBox="0 0 8 9"><path d="M2 .5h4M2.500 .5v3.500M5.500 .5v3.500M.5 4.500h7M4 4.500v4" stroke="#777" stroke-width=".9" fill="none"/></svg>
<div class="a xb" style="left:1288px;top:468.500px"></div>
<div class="a" style="left:637.500px;top:479px;width:661.500px;height:209.500px;background:#fff"></div>
<div class="a red" style="left:638px;top:483px;width:661px;height:13px"></div>
<div class="a" style="left:855.500px;top:483px;width:1.400px;height:13px;background:#f6cdc2"></div>
<div class="a" style="left:906.500px;top:483px;width:1.400px;height:13px;background:#f6cdc2"></div>
<div class="a" style="left:1113.500px;top:483px;width:1.400px;height:13px;background:#f6cdc2"></div>
<div class="a" style="left:1168px;top:483px;width:1.400px;height:13px;background:#f6cdc2"></div>
<div class="lb b" style="left:858px;top:484px;font-size:7.4px;color:#3a0d06;letter-spacing:-0.2px">Typ</div>
<div class="lb b" style="left:909px;top:484px;font-size:7.4px;color:#3a0d06;letter-spacing:-0.2px">Datei</div>
<div class="lb b" style="left:1116.500px;top:484px;font-size:7.4px;color:#3a0d06;letter-spacing:-0.2px">erstellt am</div>
<div class="lb" style="left:937px;top:586.500px;font-size:7.3px;color:#a0a0a0;letter-spacing:0.150px">Zeile anfügen mit ´F3`</div>
<!-- CONTEXT MENU -->
<div class="a" style="left:634px;top:190px;width:2px;height:388px;background:#fbfbfb"></div>
<div class="a" style="left:635.500px;top:189px;width:207.300px;height:389.300px;background:#f0f0f0;border:1px solid #a8a8a8;box-shadow:1px 1px 2px rgba(0,0,0,.28)"></div>
<div class="a" style="left:636px;top:190px;width:5.500px;height:387.500px;background:#767676"></div>
<div class="a" style="left:642px;top:498.400px;width:200px;height:14.400px;background:#abd3f7"></div><div class="a" style="left:642px;top:498.400px;width:16px;height:14.400px;background:#d7eafc"></div>
<div class="mi" style="top:192.2px">Zeile anfügen</div>
<div class="ar" style="top:194.8px"></div>
<div class="mi" style="top:207.2px">Zeile einfügen</div>
<div class="ar" style="top:209.8px"></div>
<div class="mi" style="top:222.2px">Zeile bearbeiten</div>
<div class="sc" style="top:222.2px">F2</div>
<div class="mi" style="top:237px">Zeile löschen</div>
<div class="sc" style="top:237px">Entf</div>
<div class="sep" style="top:250.700px"></div>
<div class="mi d" style="top:256.4px">Ausschneiden</div>
<div class="sc d" style="top:256.4px">Strg+X</div>
<div class="mi" style="top:271.3px">Kopieren</div>
<div class="sc" style="top:271.3px">Strg+C</div>
<div class="mi d" style="top:286.1px">Einfügen</div>
<div class="sc d" style="top:286.1px">Strg+V</div>
<div class="sep" style="top:299.7px"></div>
<div class="mi" style="top:304.8px">Pin setzen</div>
<div class="sc" style="top:304.8px">F11</div>
<div class="mi d" style="top:319.7px">Pin Eigenschaften</div>
<div class="mi d" style="top:334.7px">Alle Pins löschen</div>
<div class="mi" style="top:349.6px">Pinverwaltung</div>
<div class="sep" style="top:364px"></div>
<div class="mi d" style="top:368.8px">Block Sele<u>k</u>tieren</div>
<div class="mi d" style="top:383.7px">Block <u>Z</u>uweisung</div>
<div class="mi d" style="top:398.2px">Block <u>L</u>öschen</div>
<div class="sc d" style="top:398.2px">Strg+Entf</div>
<div class="mi" style="top:413.1px">Block weitere</div>
<div class="ar" style="top:415.7px"></div>
<div class="sep" style="top:427.3px"></div>
<div class="mi d" style="top:432.2px">Aufmaßergebnis übernehmen</div>
<div class="mi d" style="top:446.9px">Prüfbeträge der bisherigen Freigaben addieren</div>
<div class="sep" style="top:461px"></div>
<div class="mi" style="top:466.1px">Abzüge an Zahlungsfreigabe:</div>
<div class="mi" style="top:480.9px">Notizen an Zahlungsfreigabe</div>
<div class="sep" style="top:494.8px"></div>
<div class="mi" style="top:500.1px"><u>I</u>mportieren</div>
<div class="ar" style="top:502.7px;border-left-color:#fff"></div>
<div class="mi" style="top:515.1px">E<u>x</u>portieren</div>
<div class="ar" style="top:517.7px"></div>
<div class="mi" style="top:529.9px">Drucken</div>
<div class="ar" style="top:532.5px"></div>
<div class="sep" style="top:543.7px"></div>
<div class="mi d" style="top:548.8px">aktives Fenster zum Desktop hinzufügen</div>
<div class="mi" style="top:563.7px">Eigenschaften</div>
<!-- MENU ICONS -->
<svg class="a" style="left:644px;top:191.8px" width="12" height="12" viewBox="0 0 12 12"><path d="M1 1.500h5v3.500H1.500M6 5v3.500H1" fill="none" stroke="#444" stroke-width=".85"/><path d="M6 9.500h6" stroke="#2f6cae" stroke-width="1.600"/><path d="M5 9.500l2.500-2v4z" fill="#2f6cae"/></svg>
<svg class="a" style="left:644px;top:206.8px" width="12" height="12" viewBox="0 0 12 12"><path d="M1 1h5v3.500H1.500M6 4.500V8M1 8h5v3.500H1" fill="none" stroke="#444" stroke-width=".85"/><path d="M7.500 6h4.500" stroke="#2f6cae" stroke-width="1.600"/><path d="M6.300 6l2.500-2v4z" fill="#2f6cae"/></svg>
<svg class="a" style="left:644px;top:221.8px" width="12" height="12" viewBox="0 0 12 12"><rect x="1" y="2.500" width="9" height="9" fill="#dfeedd" stroke="#444" stroke-width=".85"/><path d="M1 5.500h9M1 8.500h9M4 2.500v9M7 2.500v9" stroke="#3a3a3a" stroke-width=".9"/><path d="M8 4.500L11.500 .8" stroke="#d9432f" stroke-width="1.500"/></svg>
<svg class="a" style="left:644px;top:236.6px" width="12" height="12" viewBox="0 0 12 12"><path d="M1 1h5v3.500H1.500M6 4.500V8M1 8h5v3.500H1" fill="none" stroke="#444" stroke-width=".85"/><rect x="5" y="4.700" width="4.500" height="2.800" fill="#e23a3a"/><path d="M9.500 6.100h2.500" stroke="#3a3a3a" stroke-width="1.200"/></svg>
<svg class="a" style="left:644px;top:256px" width="12" height="12" viewBox="0 0 12 12"><path d="M3 1l5.500 7.500M9 1L3.500 8.500" stroke="#a9a9a9" stroke-width="1" fill="none"/><circle cx="3" cy="10" r="1.600" fill="none" stroke="#a9a9a9" stroke-width=".9"/><circle cx="9" cy="10" r="1.600" fill="none" stroke="#a9a9a9" stroke-width=".9"/></svg>
<svg class="a" style="left:644px;top:270.9px" width="12" height="12" viewBox="0 0 12 12"><path d="M1 1h4l2 2v5H1z" fill="#dbe8f6" stroke="#2f5f9e" stroke-width="1"/><path d="M5 4.500h4l2.500 2.500v4.500H5z" fill="#8fb8e6" stroke="#2f5f9e" stroke-width="1"/></svg>
<svg class="a" style="left:644px;top:285.7px" width="12" height="12" viewBox="0 0 12 12"><rect x="1.500" y="2" width="8" height="9.500" rx="1" fill="#f3f3f3" stroke="#a9a9a9" stroke-width="1"/><rect x="3.500" y=".8" width="4" height="2.400" fill="#ddd" stroke="#a9a9a9" stroke-width=".8"/><rect x="5.500" y="6.500" width="5.500" height="5" fill="#f6f6f6" stroke="#a9a9a9" stroke-width=".8"/></svg>
<svg class="a" style="left:644px;top:304.4px" width="12" height="12" viewBox="0 0 12 12"><path d="M1.500 .8h4l-.8 1.500v2l1.300 1.500H1l1.300-1.500v-2z" fill="#d8232a"/><path d="M3.500 5.800v4" stroke="#444" stroke-width=".9"/><path d="M4.500 8.500l2.200 2.300L11.300 5.500" stroke="#1f3f7f" stroke-width="1.500" fill="none"/></svg>
<svg class="a" style="left:644px;top:319.3px" width="12" height="12" viewBox="0 0 12 12"><path d="M1.500 .8h4l-.8 1.500v2l1.300 1.500H1l1.300-1.500v-2z" fill="none" stroke="#a9a9a9" stroke-width=".8"/><path d="M3.500 5.800v4" stroke="#a9a9a9" stroke-width=".9"/><circle cx="8.300" cy="8.800" r="2.300" fill="#bbb" stroke="#a9a9a9" stroke-width=".8"/></svg>
<svg class="a" style="left:644px;top:334.3px" width="12" height="12" viewBox="0 0 12 12"><path d="M1.500 .8h4l-.8 1.500v2l1.300 1.500H1l1.300-1.500v-2z" fill="none" stroke="#a9a9a9" stroke-width=".8"/><path d="M3.500 5.800v4" stroke="#a9a9a9" stroke-width=".9"/><path d="M5.500 6.500l5.500 5M11 6.500l-5.500 5" stroke="#8a8a8a" stroke-width="1.100"/></svg>
<svg class="a" style="left:644px;top:349.2px" width="12" height="12" viewBox="0 0 12 12"><path d="M1.500 .8h5l-1 1.800v2l1.700 1.800H.8l1.700-1.800v-2z" fill="#d8232a"/><path d="M4 6.400v4.500" stroke="#444" stroke-width="1"/></svg>
<svg class="a" style="left:644px;top:368.4px" width="12" height="12" viewBox="0 0 12 12"><path d="M1 1h4M1 1v3M2.500 3h4.500l2.500 2.500v6H2.500z" fill="#f4f4f4" stroke="#a9a9a9" stroke-width=".9"/></svg>
<svg class="a" style="left:644px;top:383.3px" width="12" height="12" viewBox="0 0 12 12"><path d="M1 1h4M1 1v3M2.500 3h4.500l2.500 2.500v6H2.500z" fill="#f4f4f4" stroke="#a9a9a9" stroke-width=".9"/><path d="M9 8.200l2.500 0" stroke="#a9a9a9" stroke-width="1"/><path d="M12 8.200l-2-1.800v3.600z" fill="#a9a9a9"/></svg>
<svg class="a" style="left:644px;top:397.8px" width="12" height="12" viewBox="0 0 12 12"><path d="M1 1h4M1 1v3M2.500 3h4.500l2.500 2.500v6H2.500z" fill="#f4f4f4" stroke="#a9a9a9" stroke-width=".9"/><path d="M7 7.500l4.500 4M11.500 7.500l-4.500 4" stroke="#9a9a9a" stroke-width="1"/></svg>
<svg class="a" style="left:644px;top:412.7px" width="12" height="12" viewBox="0 0 12 12"><path d="M1.500 2.500h5l2.500 2.500v6.500H1.500z" fill="#e9e9e9" stroke="#333" stroke-width="1"/><path d="M3 8h4M3 10h4" stroke="#555" stroke-width=".7"/><path d="M12 7.800l-3-2.600v5.200z" fill="#222"/></svg>
<svg class="a" style="left:644px;top:499.7px" width="12" height="12" viewBox="0 0 12 12"><path d="M1.500 6h1M3.500 6h1" stroke="#3b67b0" stroke-width="1.600"/><path d="M5 6h3" stroke="#1c2f6b" stroke-width="2.200"/><path d="M11.500 6L7.500 2.800v6.400z" fill="#111a4a"/></svg>
<svg class="a" style="left:644px;top:514.7px" width="12" height="12" viewBox="0 0 12 12"><path d="M10.500 6h-1M8.500 6h-1" stroke="#3b67b0" stroke-width="1.600"/><path d="M7.500 6h-3" stroke="#1c2f6b" stroke-width="2.200"/><path d="M.8 6L4.800 2.800v6.400z" fill="#111a4a"/></svg>
<svg class="a" style="left:644px;top:529.5px" width="12" height="12" viewBox="0 0 12 12"><rect x="3" y="1" width="6.500" height="3.500" fill="#fff" stroke="#2d4f7e" stroke-width=".9"/><rect x="1" y="4" width="10.500" height="5.500" rx="1.300" fill="#c8d7ea" stroke="#2d4f7e" stroke-width="1"/><rect x="3" y="7.500" width="6.500" height="4" fill="#fff" stroke="#2d4f7e" stroke-width=".9"/><path d="M4 9.500h4.500" stroke="#2d4f7e" stroke-width=".7"/></svg>
<svg class="a" style="left:644px;top:548.4px" width="12" height="12" viewBox="0 0 12 12"><rect x="1" y="1.500" width="10.500" height="9" fill="#f4f4f4" stroke="#a9a9a9" stroke-width=".9"/><path d="M3 4l2 3 1.500-2M8.500 4v4" stroke="#a9a9a9" stroke-width=".8" fill="none"/></svg>
<svg class="a" style="left:644px;top:563.3px" width="12" height="12" viewBox="0 0 12 12"><rect x="1" y="1.500" width="10.500" height="9" fill="#fafafa" stroke="#444" stroke-width="1"/><path d="M1 10h10.500" stroke="#444" stroke-width="1.400"/><path d="M3.500 4h2M4.500 4v4M7 4.500h2.500M7 6h2.500M7 7.500h2.500" stroke="#555" stroke-width=".8"/></svg>
<!-- SUBMENU -->
<div class="a" style="left:842px;top:497px;width:123px;height:50.500px;background:#f0f0f0;border:1px solid #bdbdbd;box-shadow:1px 1px 2.500px rgba(0,0,0,.3)"></div>
<div class="sep" style="left:845px;width:118px;top:514px"></div>
<div class="mi" style="left:860px;top:500.100px;letter-spacing:0.05px">E-Rechnung importieren</div>
<div class="mi" style="left:860px;top:518.700px">Daten Import</div>
<div class="mi" style="left:860px;top:533.700px;letter-spacing:-0.25px">dBase Einlesen</div>
<svg class="a" style="left:845px;top:500px" width="12" height="12" viewBox="0 0 12 12"><path d="M3.500 1h5l2.500 2.500V11.500h-7.500z" fill="#fff" stroke="#c9403a" stroke-width=".9"/><circle cx="7.200" cy="7.200" r="2.600" fill="#3fae3f"/><path d="M0 2h3" stroke="#2f6cae" stroke-width="1.300"/><path d="M4.500 2L2.500 .3v3.400z" fill="#2f6cae"/></svg>
<svg class="a" style="left:845px;top:518.500px" width="12" height="12" viewBox="0 0 12 12"><rect x="4" y="1" width="7" height="10" fill="#e9e9e9" stroke="#555" stroke-width=".9"/><path d="M4 4.300h7M4 7.600h7M7.500 1v10" stroke="#555" stroke-width=".8"/><path d="M0 2h2.500" stroke="#2f6cae" stroke-width="1.300"/><path d="M4 2L2 .3v3.400z" fill="#2f6cae"/></svg>
<!-- STATUS BAR -->
<div class="a" style="left:0;top:688.500px;width:1300px;height:14.700px;background:#f0f0f0;border-top:1px solid #e4eaf0"></div><div class="a" style="left:0;top:703.200px;width:1300px;height:2px;background:#fdfdfd"></div>
<div class="a" style="left:46px;top:691px;width:1px;height:11px;background:#e3e3e3"></div>
<div class="a" style="left:91.500px;top:691px;width:1px;height:11px;background:#e3e3e3"></div>
<svg class="a" style="left:2.500px;top:692px" width="9" height="11" viewBox="0 0 9 11"><circle cx="3.800" cy="2.300" r="2.100" fill="#5a4a3a"/><path d="M.5 10.500V7.500a3 3 0 0 1 3-2.500h.8a3 3 0 0 1 3 2.500v3z" fill="#c98a3a"/><rect x="4.200" y="6.500" width="3.800" height="4" fill="#3a3a3a"/></svg>
<div class="t ui" style="left:55.700px;top:691.800px;font-size:7.300px;letter-spacing:-0.1px">DE | EN</div>
<div class="t ui" style="left:108px;top:691.800px;font-size:7.300px">Zeile 1 von 2</div>
<div class="a" style="left:172px;top:692.300px;width:11px;height:10.500px;border:1px solid #5c3f8e;background:#e6daf4;border-radius:1px"></div>
<div class="a" style="left:175px;top:694px;width:5px;height:7px;border:1px solid #7b52b0;border-radius:3px;background:#f6f0fc"></div>
<div class="a" style="left:177px;top:695.500px;width:1px;height:4px;background:#7b52b0"></div>
</body></html>
